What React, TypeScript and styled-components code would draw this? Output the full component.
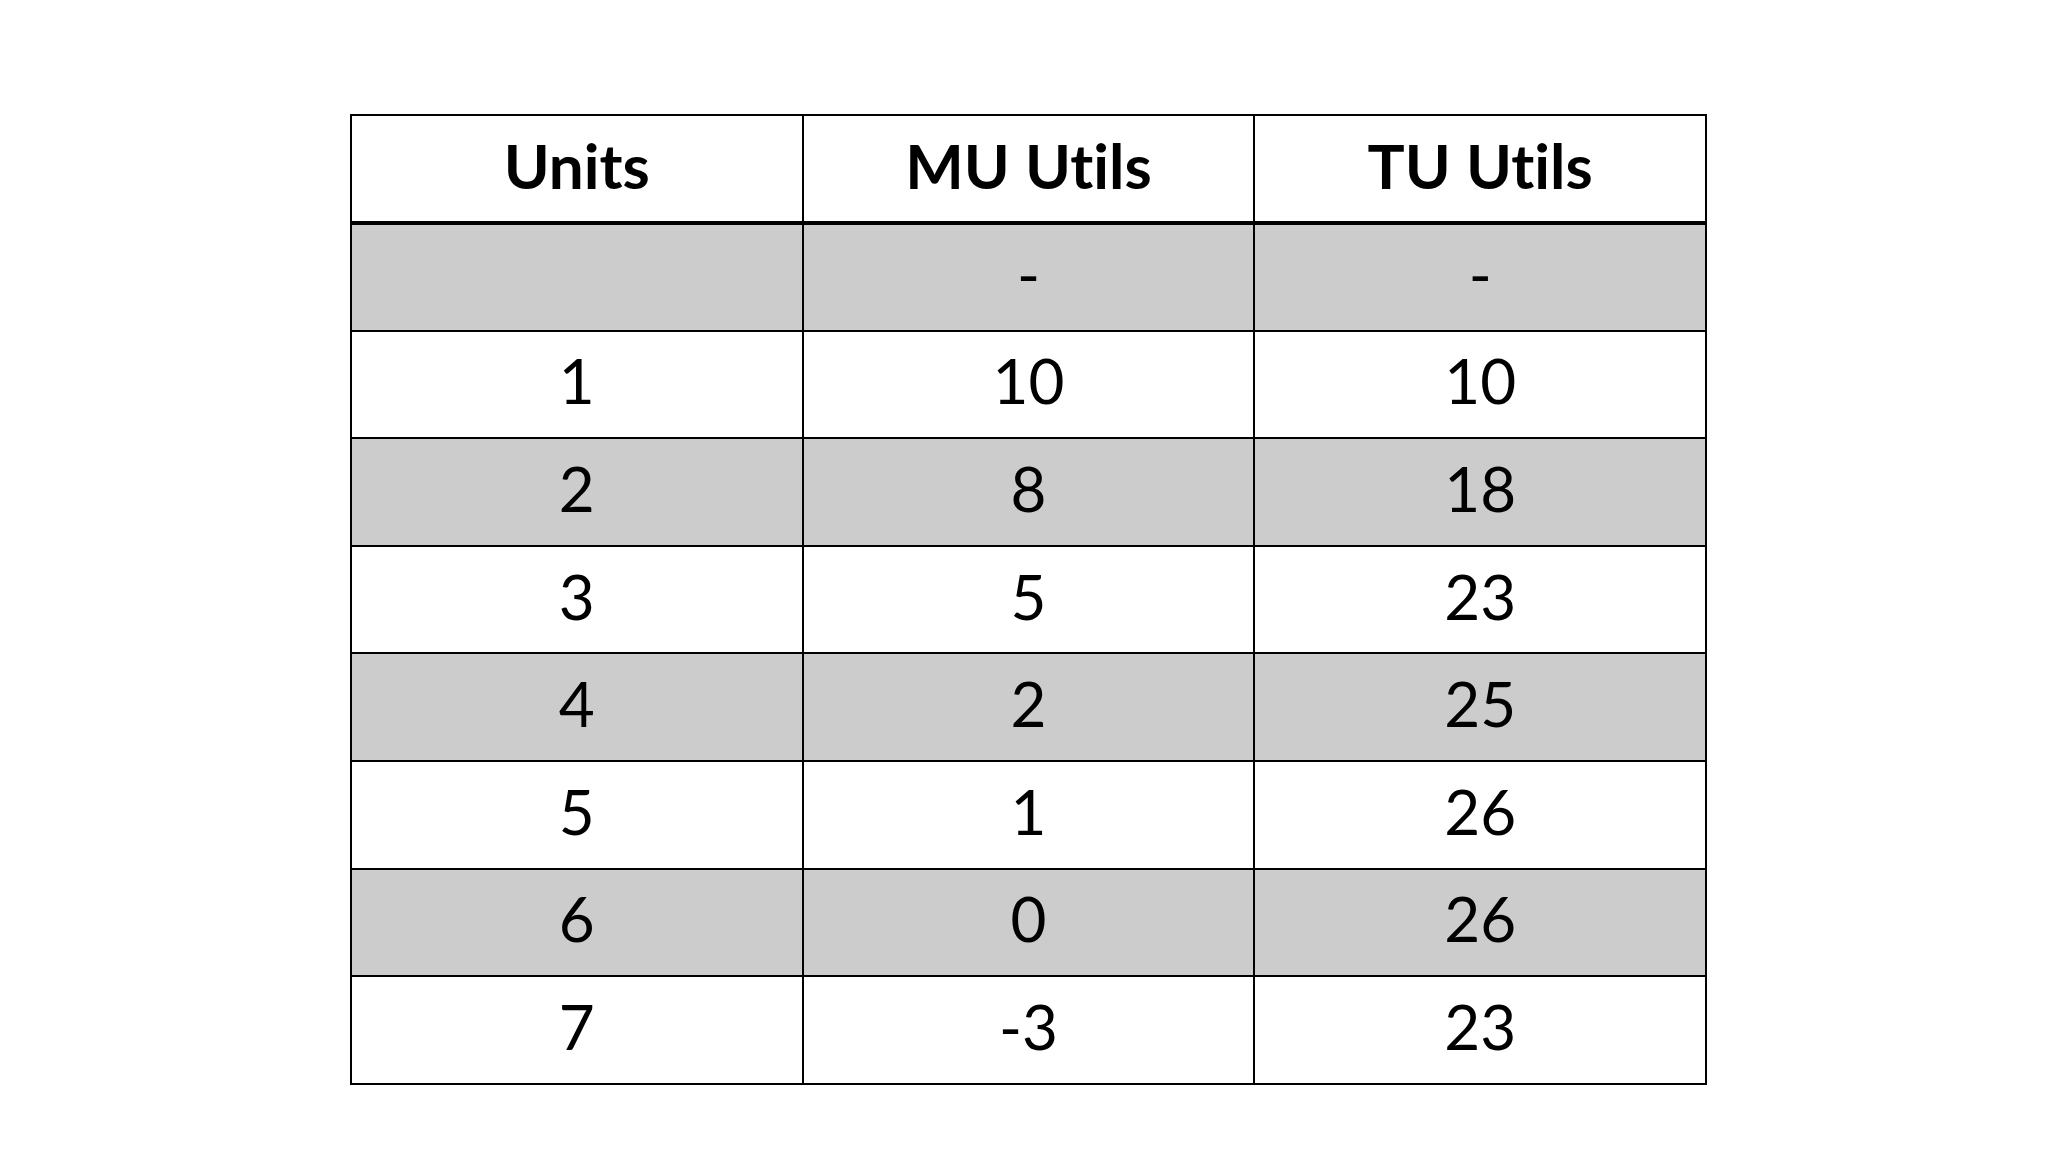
import styled, { createGlobalStyle } from "styled-components";

const GlobalStyle = createGlobalStyle`
  html, body {
    margin: 0;
    padding: 0;
    background: #ffffff;
  }
  body {
    font-family: Lato, "Open Sans", "Liberation Sans", sans-serif;
    font-variant-ligatures: none;
    color: #000;
  }
`;

const rows = [
  { units: "", mu: "-", tu: "-" },
  { units: "1", mu: "10", tu: "10" },
  { units: "2", mu: "8", tu: "18" },
  { units: "3", mu: "5", tu: "23" },
  { units: "4", mu: "2", tu: "25" },
  { units: "5", mu: "1", tu: "26" },
  { units: "6", mu: "0", tu: "26" },
  { units: "7", mu: "-3", tu: "23" },
];

const App = () => {
  return (
    <>
      <GlobalStyle />
      <Page>
        <Table>
          <thead>
            <tr>
              <HeadCell>Units</HeadCell>
              <HeadCell>MU Utils</HeadCell>
              <HeadCell>TU Utils</HeadCell>
            </tr>
          </thead>
          <tbody>
            {rows.map((r, i) => (
              <Row key={i} $shaded={i % 2 === 0}>
                <Cell>{r.units}</Cell>
                <Cell>{r.mu}</Cell>
                <Cell>{r.tu}</Cell>
              </Row>
            ))}
          </tbody>
        </Table>
      </Page>
    </>
  );
};

export default App;

const Page = styled.div`
  width: 2048px;
  height: 1152px;
  box-sizing: border-box;
  padding: 114px 0 0 350px;
`;

const Table = styled.table`
  width: 1357px;
  border-collapse: collapse;
  table-layout: fixed;
  border: 2px solid #000;
`;

const HeadCell = styled.th`
  height: 108px;
  padding: 0 0 8px;
  box-sizing: border-box;
  border: 2px solid #000;
  border-bottom: 4px solid #000;
  font-size: 62px;
  font-weight: 700;
  text-align: center;
  vertical-align: middle;
  line-height: 1;
`;

const Row = styled.tr<{ $shaded: boolean }>`
  background: ${({ $shaded }) => ($shaded ? "#cccccc" : "#ffffff")};
`;

const Cell = styled.td`
  height: 107.6px;
  padding: 0 0 8px;
  box-sizing: border-box;
  border: 2px solid #000;
  font-size: 62px;
  font-weight: 400;
  text-align: center;
  vertical-align: middle;
  line-height: 1;
`;
